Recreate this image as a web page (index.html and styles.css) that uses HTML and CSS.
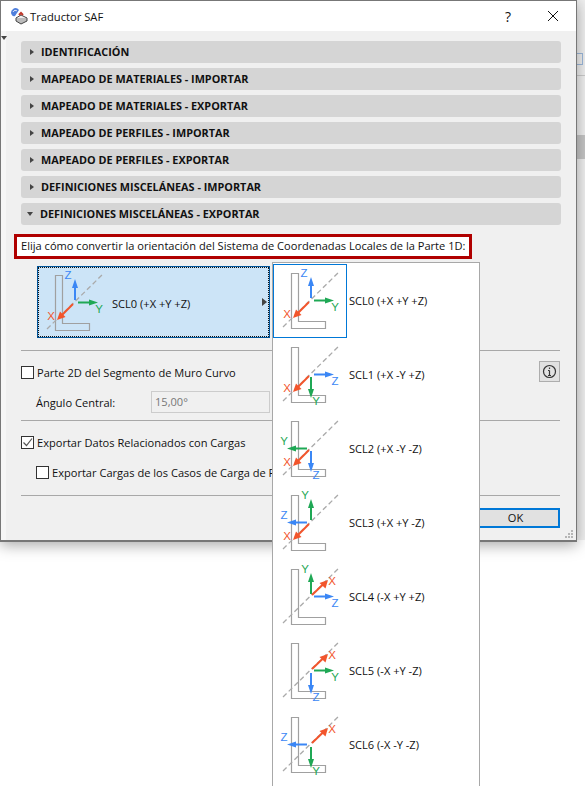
FILE: index.html
```html
<!DOCTYPE html>
<html>
<head>
	<meta http-equiv="content-type" content="text/html; charset=utf-8">
	<title>Traductor SAF</title>
	<link rel="stylesheet" href="styles.css">
</head>
<body>
	<svg class="s-defs" width="0" height="0">
		<defs>
			<g id="base">
				<path class="s-shape" d="M18.5 9.5H25.5V57.5H52.5V64.5H18.5Z"/>
				<path class="s-diag" d="M10 63L65 9"/>
			</g>
			<g id="up"><path class="s-line" d="M38 34V18"/><path class="s-head" d="M38 13L41 22H35Z"/></g>
			<g id="down"><path class="s-line" d="M38 39V55"/><path class="s-head" d="M38 60L41 51H35Z"/></g>
			<g id="right"><path class="s-line" d="M41 36.5H56"/><path class="s-head" d="M61 36.5L52 39.5V33.5Z"/></g>
			<g id="left"><path class="s-line" d="M34 36.5H19"/><path class="s-head" d="M14 36.5L23 39.5V33.5Z"/></g>
			<g id="x-dl"><path class="s-line" d="M36 38L24 50"/><path class="s-head" d="M20 54L23 45.5L28.5 51Z"/><text class="s-axis" x="14" y="54">X</text></g>
			<g id="x-ur"><path class="s-line" d="M39 35L51 23.5"/><path class="s-head" d="M55 20L52.5 28.5L46.5 23Z"/><text class="s-axis" x="59" y="24.5">X</text></g>
		</defs>
	</svg>

	<div class="s-behind">
		<div class="s-behind-box"></div>
		<div class="s-behind-line"></div>
		<div class="s-behind-block"></div>
	</div>

	<div class="s-dialog">
		<div class="s-title">
			<svg class="s-appicon" width="18" height="18" viewBox="0 0 18 18">
				<path d="M1 5C3 0 7 0 9 3L5 9C3 10 1 8 1 5Z" fill="#4f7fdc"/>
				<path d="M3 5C4 3 6 3 7 4" fill="none" stroke="#dfe8f8"/>
				<path d="M6 11L11 8L17 11L11 14Z" fill="#eee" stroke="#444"/>
				<path d="M6 11V14L11 17L17 14V11" fill="#bbb" stroke="#444"/>
				<path d="M9 8L11 6L13 8" fill="none" stroke="#c0392b" stroke-width="2"/>
			</svg>
			<span class="s-title-text">Traductor SAF</span>
			<span class="s-help">?</span>
			<svg class="s-close" width="12" height="12" viewBox="0 0 12 12"><path d="M1 1L11 11M11 1L1 11"/></svg>
		</div>
		<div class="s-body">
			<div class="s-corner"></div>
			<div class="s-sections">
				<div class="s-section"><i class="s-tri"></i>IDENTIFICACIÓN</div>
				<div class="s-section"><i class="s-tri"></i>MAPEADO DE MATERIALES - IMPORTAR</div>
				<div class="s-section"><i class="s-tri"></i>MAPEADO DE MATERIALES - EXPORTAR</div>
				<div class="s-section"><i class="s-tri"></i>MAPEADO DE PERFILES - IMPORTAR</div>
				<div class="s-section"><i class="s-tri"></i>MAPEADO DE PERFILES - EXPORTAR</div>
				<div class="s-section"><i class="s-tri"></i>DEFINICIONES MISCELÁNEAS - IMPORTAR</div>
				<div class="s-section"><i class="s-tri s-open"></i>DEFINICIONES MISCELÁNEAS - EXPORTAR</div>
			</div>
			<div class="s-callout">Elija cómo convertir la orientación del Sistema de Coordenadas Locales de la Parte 1D:</div>
			<div class="s-picker">
				<div class="s-picker-inner">
					<svg class="s-icon" width="74" height="72" viewBox="0 0 74 72">
						<use href="#base"/>
						<g class="s-blue"><use href="#up"/><text class="s-axis" x="31" y="13">Z</text></g>
						<g class="s-green"><use href="#right"/><text class="s-axis" x="62" y="47">Y</text></g>
						<g class="s-red"><use href="#x-dl"/></g>
					</svg>
					<span class="s-picker-label">SCL0 (+X +Y +Z)</span>
					<i class="s-picker-arrow"></i>
				</div>
			</div>
			<div class="s-rule"></div>
			<div class="s-row s-row-first">
				<span class="s-check"></span>
				<span class="s-label">Parte 2D del Segmento de Muro Curvo</span>
				<span class="s-info">
					<svg width="15" height="15" viewBox="0 0 15 15"><circle cx="7.5" cy="7.5" r="6"/><path d="M7.5 6.5V11.5M6 11.5H9M6 6.5H7.5"/><path d="M7.5 3.5V5"/></svg>
				</span>
			</div>
			<div class="s-row s-row-angle">
				<span class="s-label s-angle-label">Ángulo Central:</span>
				<span class="s-input">15,00°</span>
			</div>
			<div class="s-rule s-rule-mid"></div>
			<div class="s-row s-row-loads">
				<span class="s-check">
					<svg width="11" height="11" viewBox="0 0 11 11"><path d="M1.5 5.5L4.5 8.5L10 1.5"/></svg>
				</span>
				<span class="s-label">Exportar Datos Relacionados con Cargas</span>
			</div>
			<div class="s-row s-row-sub">
				<span class="s-check"></span>
				<span class="s-label s-label-cut">Exportar Cargas de los Casos de Carga de Peso Propio</span>
			</div>
			<div class="s-rule s-rule-end"></div>
			<div class="s-actions"><span class="s-ok">OK</span></div>
			<svg class="s-grip" width="8" height="8" viewBox="0 0 8 8"><path d="M6 0h2v2H6zM3 3h2v2H3zM6 3h2v2H6zM0 6h2v2H0zM3 6h2v2H3zM6 6h2v2H6z"/></svg>
		</div>
	</div>

	<div class="s-menu">
		<div class="s-item s-item-on">
			<svg class="s-icon" width="74" height="74" viewBox="0 0 74 74"><use href="#base"/>
				<g class="s-blue"><use href="#up"/><text class="s-axis" x="31" y="13">Z</text></g>
				<g class="s-green"><use href="#right"/><text class="s-axis" x="62" y="47">Y</text></g>
				<g class="s-red"><use href="#x-dl"/></g>
			</svg>
			<span>SCL0 (+X +Y +Z)</span>
		</div>
		<div class="s-item">
			<svg class="s-icon" width="74" height="74" viewBox="0 0 74 74"><use href="#base"/>
				<g class="s-blue"><use href="#right"/><text class="s-axis" x="62" y="47">Z</text></g>
				<g class="s-green"><use href="#down"/><text class="s-axis" x="43" y="67">Y</text></g>
				<g class="s-red"><use href="#x-dl"/></g>
			</svg>
			<span>SCL1 (+X -Y +Z)</span>
		</div>
		<div class="s-item">
			<svg class="s-icon" width="74" height="74" viewBox="0 0 74 74"><use href="#base"/>
				<g class="s-blue"><use href="#down"/><text class="s-axis" x="43" y="67">Z</text></g>
				<g class="s-green"><use href="#left"/><text class="s-axis" x="11" y="33">Y</text></g>
				<g class="s-red"><use href="#x-dl"/></g>
			</svg>
			<span>SCL2 (+X -Y -Z)</span>
		</div>
		<div class="s-item">
			<svg class="s-icon" width="74" height="74" viewBox="0 0 74 74"><use href="#base"/>
				<g class="s-blue"><use href="#left"/><text class="s-axis" x="11" y="33">Z</text></g>
				<g class="s-green"><use href="#up"/><text class="s-axis" x="32" y="13">Y</text></g>
				<g class="s-red"><use href="#x-dl"/></g>
			</svg>
			<span>SCL3 (+X +Y -Z)</span>
		</div>
		<div class="s-item">
			<svg class="s-icon" width="74" height="74" viewBox="0 0 74 74"><use href="#base"/>
				<g class="s-blue"><use href="#right"/><text class="s-axis" x="62" y="47">Z</text></g>
				<g class="s-green"><use href="#up"/><text class="s-axis" x="32" y="13">Y</text></g>
				<g class="s-red"><use href="#x-ur"/></g>
			</svg>
			<span>SCL4 (-X +Y +Z)</span>
		</div>
		<div class="s-item">
			<svg class="s-icon" width="74" height="74" viewBox="0 0 74 74"><use href="#base"/>
				<g class="s-blue"><use href="#down"/><text class="s-axis" x="43" y="67">Z</text></g>
				<g class="s-green"><use href="#right"/><text class="s-axis" x="62" y="47">Y</text></g>
				<g class="s-red"><use href="#x-ur"/></g>
			</svg>
			<span>SCL5 (-X +Y -Z)</span>
		</div>
		<div class="s-item">
			<svg class="s-icon" width="74" height="74" viewBox="0 0 74 74"><use href="#base"/>
				<g class="s-blue"><use href="#left"/><text class="s-axis" x="11" y="33">Z</text></g>
				<g class="s-green"><use href="#down"/><text class="s-axis" x="43" y="67">Y</text></g>
				<g class="s-red"><use href="#x-ur"/></g>
			</svg>
			<span>SCL6 (-X -Y -Z)</span>
		</div>
	</div>
</body>
</html>
```

FILE: styles.css
```css
html, body {
	height: 100%;
}

body {
	position: relative;
	margin: 0;
	background-color: #fff;
	font-family: 'Open Sans', sans-serif;
	font-size: 11.08px;
	color: #111;
	overflow: hidden;
}

.s-defs {
	display: block;
	height: 0;
}

/*Window behind the dialog*/

.s-behind {
	position: absolute;
	left: 577px;
	top: 0;
	right: 0;
	height: 540px;
	background-color: #f0f0f0;
}

.s-behind-box {
	position: absolute;
	left: 0;
	top: 53px;
	width: 5px;
	height: 10px;
	border: 1px solid #9db9dc;
	border-left: 0;
}

.s-behind-line {
	position: absolute;
	left: 0;
	right: 0;
	top: 75px;
	height: 1px;
	background-color: #ccc;
}

.s-behind-block {
	position: absolute;
	left: 0;
	right: 0;
	top: 135px;
	height: 24px;
	background-color: #c6c6c6;
}

/*Dialog*/

.s-dialog {
	position: relative;
	width: 575px;
	height: 539px;
	border: 1px solid #777;
	border-bottom-width: 2px;
	background-color: #fff;
	box-shadow: 0 3px 14px rgba(0, 0, 0, 0.35);
	display: flex;
	flex-direction: column;
}

.s-title {
	flex: 0 0 30px;
	display: flex;
	align-items: center;
	padding-left: 9px;
}

.s-appicon {
	margin-right: 2px;
}

.s-title-text {
	font-size: 11.2px;
	flex: 1 1;
}

.s-help {
	font-size: 14px;
	margin-right: 36px;
}

.s-close {
	margin-right: 17px;
	fill: none;
	stroke: #111;
}

.s-body {
	position: relative;
	flex: 1 1;
	background-color: #f0f0f0;
	border-left: 5px solid #f6f6f6;
	padding: 10px 15px 0 15px;
}

.s-corner {
	position: absolute;
	left: -5px;
	top: 5px;
	border: 3px solid transparent;
	border-top: 4px solid #444;
	border-bottom: 0;
}

.s-sections {
	display: flex;
	flex-direction: column;
	gap: 5px;
}

.s-section {
	display: flex;
	align-items: center;
	height: 22px;
	box-sizing: border-box;
	padding-bottom: 2px;
	background-color: #d5d5d5;
	border-radius: 3px;
	font-weight: 700;
	font-size: 10.85px;
}

.s-tri {
	flex: none;
	width: 0;
	height: 0;
	margin: 2px 7px 0 9px;
	border-left: 4px solid #444;
	border-top: 3.5px solid transparent;
	border-bottom: 3.5px solid transparent;
}

.s-tri.s-open {
	margin: 2px 7px 0 6px;
	border-top: 4px solid #444;
	border-left: 3.5px solid transparent;
	border-right: 3.5px solid transparent;
	border-bottom: 0;
}

.s-callout {
	margin: 9px 0 0 -7px;
	width: 458px;
	height: 25px;
	box-sizing: border-box;
	border: 3px solid #b00000;
	background-color: #fff;
	padding-left: 4px;
	line-height: 18px;
	white-space: nowrap;
}

.s-picker {
	margin: 7px 0 0 16px;
	width: 233px;
	height: 72px;
	box-sizing: border-box;
	border: 1px solid #005499;
	background-color: #cce4f7;
}

.s-picker-inner {
	position: relative;
	display: flex;
	align-items: center;
	height: 70px;
	box-sizing: border-box;
	border: 1px dotted #111;
}

.s-picker-inner .s-icon {
	margin: -2px 0 0 -2px;
	flex: none;
	align-self: flex-start;
}

.s-picker-label {
	margin: 2px 0 0 1px;
}

.s-picker-arrow {
	position: absolute;
	right: 1px;
	top: 30px;
	border-left: 5px solid #444;
	border-top: 4px solid transparent;
	border-bottom: 4px solid transparent;
}

.s-rule {
	height: 1px;
	margin: 12px 1px 0 0;
	background-color: #a8a8a8;
}

.s-row {
	position: relative;
	display: flex;
	align-items: center;
	height: 18px;
}

.s-row-first {
	margin-top: 12px;
}

.s-row-angle {
	margin-top: 10px;
	height: 22px;
	padding-left: 15px;
}

.s-row-loads {
	margin-top: 12px;
}

.s-row-sub {
	margin-top: 12px;
	padding-left: 15px;
}

.s-rule-mid {
	margin-top: 7px;
}

.s-rule-end {
	margin-top: 14px;
}

.s-check {
	flex: none;
	display: flex;
	align-items: center;
	justify-content: center;
	width: 11px;
	height: 11px;
	margin-right: 3px;
	border: 1px solid #333;
	background-color: #fff;
}

.s-check svg {
	fill: none;
	stroke: #555;
	stroke-width: 1.2;
}

.s-label {
	white-space: nowrap;
}

.s-label-cut {
	width: 220px;
	overflow: hidden;
}

.s-angle-label {
	width: 115px;
}

.s-input {
	width: 119px;
	height: 22px;
	box-sizing: border-box;
	border: 1px solid #ccc;
	background-color: #f0f0f0;
	color: #777;
	padding-left: 3px;
	line-height: 20px;
}

.s-info {
	position: absolute;
	right: 1px;
	top: -2px;
	display: flex;
	align-items: center;
	justify-content: center;
	width: 21px;
	height: 21px;
	box-sizing: border-box;
	border: 1px solid #adadad;
	background-color: #e1e1e1;
}

.s-info svg {
	fill: none;
	stroke: #333;
	stroke-width: 1.2;
}

.s-actions {
	display: flex;
	justify-content: flex-end;
	margin: 12px 1px 0 0;
}

.s-ok {
	width: 85px;
	height: 16px;
	border: 2px solid #0078d7;
	background-color: #e1e1e1;
	text-align: center;
	line-height: 16px;
}

.s-grip {
	position: absolute;
	right: 3px;
	bottom: 2px;
	fill: #b5b5b5;
}

/*Popup menu*/

.s-menu {
	position: absolute;
	left: 272px;
	top: 262px;
	width: 206px;
	height: 600px;
	border: 1px solid #a8a8a8;
	background-color: #fff;
	padding: 1px 0 0 0;
}

.s-item {
	display: flex;
	align-items: center;
	height: 74px;
}

.s-item span {
	margin-top: -2px;
}

.s-item .s-icon {
	flex: none;
	margin-right: 2px;
}

.s-item-on .s-icon {
	outline: 1px solid #0078d7;
	outline-offset: -1px;
}

/*Icon parts*/

.s-icon {
	display: block;
	overflow: visible;
}

.s-shape {
	fill: none;
	stroke: #a0a0a0;
	stroke-width: 1.2;
}

.s-diag {
	fill: none;
	stroke: #aaa;
	stroke-width: 1.3;
	stroke-dasharray: 5 3;
}

.s-line {
	fill: none;
	stroke: currentColor;
	stroke-width: 2;
}

.s-head {
	fill: currentColor;
}

.s-axis {
	fill: currentColor;
	font-family: 'Liberation Sans', sans-serif;
	font-size: 11.5px;
	text-anchor: middle;
}

.s-blue {
	color: #3b87f5;
}

.s-green {
	color: #1fa855;
}

.s-red {
	color: #f2552c;
}
```
